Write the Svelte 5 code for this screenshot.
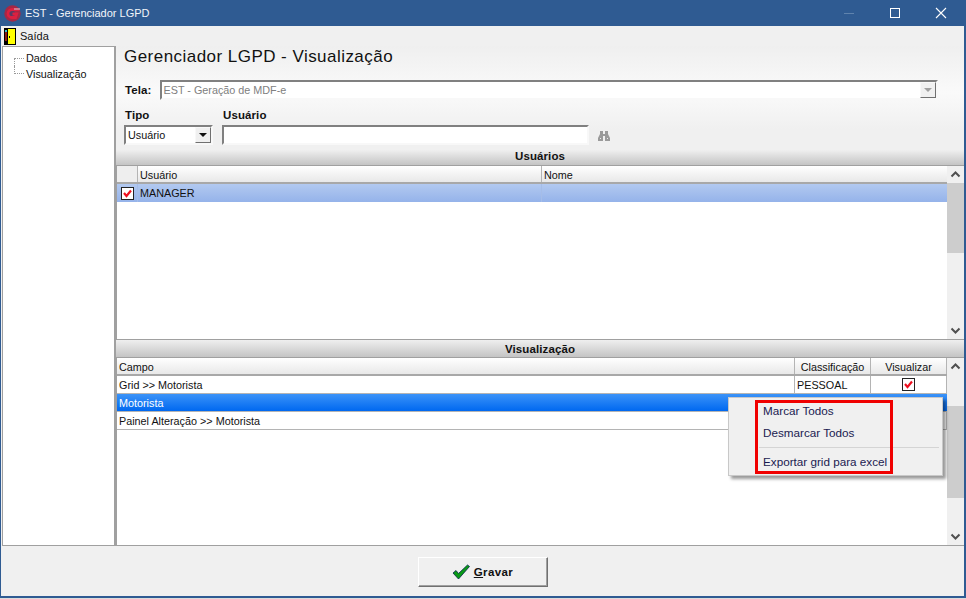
<script>
  let users = [{ login: "MANAGER", nome: "", marcado: true }];
  let campos = [
    { campo: "Grid >> Motorista", classe: "PESSOAL", visivel: true },
    { campo: "Motorista", classe: "", visivel: false, selected: true },
    { campo: "Painel Alteração >> Motorista", classe: "", visivel: false }
  ];
</script>

{#snippet check()}
  <svg class="check" width="13" height="13" viewBox="0 0 13 13">
    <rect x="0.5" y="0.5" width="12" height="12" fill="#fff" stroke="#222"/>
    <path d="M3 6l2.5 3L10 3.5" fill="none" stroke="#ee1020" stroke-width="2.2"/>
  </svg>
{/snippet}

{#snippet scrollbar(gap_top, thumb_h)}
  <div class="scrollbar">
    <svg class="arrow" width="17" height="17" viewBox="0 0 17 17"><path d="M4.5 10.5l4-4 4 4" fill="none" stroke="#505050" stroke-width="2"/></svg>
    <div class="track">
      <div class="thumb" style="margin-top:{gap_top}px;height:{thumb_h}px"></div>
    </div>
    <svg class="arrow" width="17" height="17" viewBox="0 0 17 17"><path d="M4.5 6.5l4 4 4-4" fill="none" stroke="#505050" stroke-width="2"/></svg>
  </div>
{/snippet}

<div class="window">
  <header class="titlebar">
    <svg class="logo" width="17" height="17" viewBox="0 0 17 17">
      <circle cx="8.5" cy="8.5" r="8.2" fill="#a52845"/>
      <circle cx="8" cy="8.5" r="3" fill="#5a3a62"/>
      <path d="M15.5 4.5H8a4 4 0 0 0 0 8h3.500l1.200-3.500H8.500" fill="none" stroke="#dc2040" stroke-width="2.800"/>
      <path d="M10 4h6" stroke="#c9ccd6" stroke-width="1"/>
    </svg>
    <span class="title">EST - Gerenciador LGPD</span>
    <div class="win-buttons">
      <svg width="46" height="26" viewBox="0 0 46 26"><path d="M18 13.5h10" stroke="#5f83ad" stroke-width="1"/></svg>
      <svg width="46" height="26" viewBox="0 0 46 26"><rect x="18.5" y="8.5" width="9" height="9" fill="none" stroke="#fff"/></svg>
      <svg width="46" height="26" viewBox="0 0 46 26"><path d="M18 8l10 10M28 8L18 18" stroke="#fff" stroke-width="1.1"/></svg>
    </div>
  </header>

  <nav class="menubar">
    <svg width="12" height="17" viewBox="0 0 12 17">
      <rect width="12" height="17" fill="#000"/>
      <rect x="4" y="1" width="7" height="15" fill="#ffff00"/>
      <rect x="1" y="3" width="2" height="10" fill="#8c1a14"/>
      <rect x="1" y="2" width="2" height="2" fill="#30c0d0"/>
      <rect x="5" y="8" width="1" height="2" fill="#000"/>
    </svg>
    <span>Saída</span>
  </nav>

  <div class="body">
    <aside class="tree">
      <div class="tree-item"><span class="dots"></span>Dados</div>
      <div class="tree-item"><span class="dots"></span>Visualização</div>
    </aside>

    <main class="content">
      <div class="form">
        <h1>Gerenciador LGPD - Visualização</h1>
        <div class="tela-row">
          <label for="tela">Tela:</label>
          <div class="combo disabled" id="tela">
            <span class="value">EST - Geração de MDF-e</span>
            <span class="combo-btn"><i></i></span>
          </div>
        </div>
        <div class="filter-row">
          <div class="field">
            <span class="field-label">Tipo</span>
            <div class="combo tipo">
              <span class="value">Usuário</span>
              <span class="combo-btn"><i></i></span>
            </div>
          </div>
          <div class="field">
            <span class="field-label">Usuário</span>
            <div class="text-input"></div>
          </div>
          <svg class="binoculars" width="12" height="11" viewBox="0 0 12 11">
            <path d="M2 1h3v3h2V1h3v3l2 4v3H7V6H5v5H0V8l2-4z" fill="#9a9a9a"/>
            <path d="M2 8h1v1H2zM9 8h1v1H9z" fill="#eee"/>
          </svg>
        </div>
      </div>

      <div class="section-bar">Usuários</div>
      <section class="grid top">
        <div class="grid-main">
          <div class="row head">
            <div class="cell c-check"></div>
            <div class="cell c-user">Usuário</div>
            <div class="cell c-fill">Nome</div>
          </div>
          {#each users as u}
            <div class="row user-row">
              <div class="cell c-check">{@render check()}</div>
              <div class="cell c-user">{u.login}</div>
              <div class="cell c-fill">{u.nome}</div>
            </div>
          {/each}
        </div>
        {@render scrollbar(0, 70)}
      </section>

      <div class="section-bar second">Visualização</div>
      <section class="grid bottom">
        <div class="grid-main">
          <div class="row head">
            <div class="cell c-campo">Campo</div>
            <div class="cell c-class">Classificação</div>
            <div class="cell c-vis">Visualizar</div>
          </div>
          {#each campos as c}
            <div class="row data" class:selected={c.selected}>
              <div class="cell c-campo">{c.campo}</div>
              <div class="cell c-class">{c.classe}</div>
              <div class="cell c-vis">{#if c.visivel}{@render check()}{/if}</div>
            </div>
          {/each}
        </div>
        {@render scrollbar(31, 92)}
      </section>
    </main>
  </div>

  <footer class="footer">
    <button class="save">
      <svg width="18" height="16" viewBox="0 0 18 16">
        <path d="M1 9l3-2.500 2.500 3L15.500 1l2 1.500L6.500 15z" fill="#0a9a16" stroke="#04244a" stroke-width="0.8"/>
      </svg>
      <span><u>G</u>ravar</span>
    </button>
  </footer>

  <div class="context-menu">
    <div class="menu-item">Marcar Todos</div>
    <div class="menu-item">Desmarcar Todos</div>
    <div class="menu-sep"></div>
    <div class="menu-item">Exportar grid para excel</div>
    <div class="highlight"></div>
  </div>
</div>

<style>
  :global(body) {
    background: #dcdcdc;
  }

  .window {
    position: relative;
    box-sizing: border-box;
    width: 966px;
    height: 598px;
    display: flex;
    flex-direction: column;
    border: solid #2f5b92;
    border-width: 0 2px 2px 1px;
    background: #f0f0f0;
    font-family: "Liberation Sans", Arial, sans-serif;
    font-size: 10.8px;
    color: #111;
    overflow: hidden;
  }

  .titlebar {
    flex: none;
    height: 26px;
    display: flex;
    align-items: center;
    background: #2f5b92;
    color: #f2f5f9;
    padding-left: 3px;
  }

  .logo {
    margin-right: 4px;
  }

  .title {
    font-size: 11px;
  }

  .win-buttons {
    margin-left: auto;
    display: flex;
  }

  .menubar {
    flex: none;
    height: 20px;
    display: flex;
    align-items: center;
    gap: 4px;
    padding-left: 3px;
    font-size: 11px;
  }

  .body {
    flex: 1;
    min-height: 0;
    display: flex;
    padding-left: 1px;
  }

  .tree {
    flex: none;
    box-sizing: border-box;
    width: 114px;
    background: #fff;
    border: 1px solid #a0a0a0;
    border-width: 1px 2px 1px 1px;
    padding-top: 3px;
  }

  .tree-item {
    height: 16px;
    display: flex;
    align-items: center;
    white-space: nowrap;
  }

  .dots {
    box-sizing: border-box;
    width: 10px;
    height: 8px;
    margin: 0 2px 0 11px;
    border-left: 1px dotted #999;
  }

  .tree-item:first-child .dots {
    align-self: flex-end;
    border-top: 1px dotted #999;
  }

  .tree-item:last-child .dots {
    align-self: flex-start;
    border-bottom: 1px dotted #999;
  }

  .content {
    flex: 1;
    min-width: 0;
    display: flex;
    flex-direction: column;
  }

  .form {
    flex: none;
    height: 104px;
    box-sizing: border-box;
    padding: 0 0 0 8px;
    background: linear-gradient(180deg, #efefef, #fafafa 45%, #f0f0f0 80%);
  }

  h1 {
    margin: 0;
    padding-top: 1px;
    font-size: 17px;
    font-weight: 400;
    line-height: 20px;
    letter-spacing: 0.46px;
    color: #111;
  }

  .tela-row {
    display: flex;
    align-items: center;
    gap: 8px;
    margin-top: 13px;
    padding-left: 1px;
  }

  .tela-row label,
  .field-label {
    font-weight: 700;
    font-size: 11.5px;
    letter-spacing: 0.1px;
  }

  .combo {
    display: flex;
    align-items: center;
    box-sizing: border-box;
    height: 20px;
    background: #fff;
    border: 2px solid;
    border-color: #808080 #f8f8f8 #f8f8f8 #808080;
    padding-left: 2px;
  }

  .combo.disabled {
    width: 778px;
    color: #808080;
  }

  .combo .value {
    flex: 1;
  }

  .combo-btn {
    flex: none;
    width: 16px;
    height: 16px;
    box-sizing: border-box;
    display: flex;
    align-items: center;
    justify-content: center;
    background: #f0f0f0;
    border: 1px solid;
    border-color: #f8f8f8 #707070 #707070 #f8f8f8;
  }

  .combo-btn i {
    border: 4px solid transparent;
    border-top: 4px solid #111;
    border-bottom: 0;
  }

  .disabled .combo-btn i {
    border-top-color: #a0a0a0;
  }

  .filter-row {
    display: flex;
    align-items: flex-end;
    margin-top: 8px;
  }

  .field {
    display: flex;
    flex-direction: column;
    gap: 3px;
  }

  .field + .field {
    margin-left: 9px;
  }

  .field-label {
    line-height: 14px;
    padding-left: 1px;
  }

  .tipo {
    width: 89px;
  }

  .text-input {
    box-sizing: border-box;
    width: 367px;
    height: 20px;
    background: #fff;
    border: 2px solid;
    border-color: #808080 #f8f8f8 #f8f8f8 #808080;
  }

  .binoculars {
    margin: 0 0 4px 9px;
  }

  .section-bar {
    flex: none;
    height: 16px;
    box-sizing: border-box;
    line-height: 13px;
    text-align: center;
    font-size: 11.5px;
    font-weight: 700;
    letter-spacing: 0.1px;
    background: linear-gradient(180deg, #efefef, #c4c4c4);
    border-bottom: 1px solid #a0a0a0;
  }

  .section-bar.second {
    height: 19px;
    line-height: 18px;
    border-top: 1px solid #a0a0a0;
  }

  .grid {
    display: flex;
    min-height: 0;
    background: #fff;
    border-left: 1px solid #a0a0a0;
  }

  .grid.top {
    flex: none;
    height: 173px;
  }

  .grid.bottom {
    flex: 1;
    border-bottom: 1px solid #a0a0a0;
  }

  .grid-main {
    flex: 1;
    min-width: 0;
  }

  .row {
    display: flex;
    box-sizing: border-box;
    height: 18px;
    border-bottom: 1px solid #b4b4b4;
  }

  .row.head {
    height: 18px;
    border-bottom: 2px solid #a8a8a8;
    background: linear-gradient(180deg, #fff, #e8e8e8);
  }

  .cell {
    box-sizing: border-box;
    display: flex;
    align-items: center;
    padding-left: 2px;
    border-right: 1px solid #b4b4b4;
    white-space: nowrap;
    overflow: hidden;
  }

  .head .cell {
    padding-top: 1px;
  }

  .head .c-check {
    background: #eeeeee;
  }

  .c-check {
    width: 21px;
    justify-content: center;
    padding: 0;
  }

  .c-user {
    width: 404px;
  }

  .c-fill {
    flex: 1;
    border-right: 0;
  }

  .user-row {
    border-bottom: 0;
    background: linear-gradient(180deg, #b2c9f0, #95b3ea);
  }

  .user-row .cell {
    border-right-color: #a5bde8;
  }

  .c-campo {
    flex: 1;
  }

  .c-class {
    width: 76px;
    justify-content: flex-start;
  }

  .head .c-class,
  .head .c-vis {
    justify-content: center;
    padding-left: 0;
  }

  .c-vis {
    width: 76px;
    justify-content: center;
    padding-left: 0;
  }

  .data.selected {
    background: linear-gradient(180deg, #3b93f8, #0068f0);
    color: #fff;
  }

  .data.selected .cell {
    border-right-color: transparent;
  }

  .scrollbar {
    flex: none;
    width: 17px;
    display: flex;
    flex-direction: column;
    background: #f0f0f0;
  }

  .arrow {
    flex: none;
  }

  .track {
    flex: 1;
    min-height: 0;
  }

  .thumb {
    background: #cdcdcd;
  }

  .footer {
    flex: none;
    box-sizing: border-box;
    height: 50px;
    padding-top: 2px;
    display: flex;
    justify-content: center;
    align-items: center;
  }

  .save {
    box-sizing: border-box;
    width: 130px;
    height: 30px;
    display: flex;
    align-items: center;
    justify-content: center;
    gap: 4px;
    background: #f0f0f0;
    border: 1px solid;
    border-color: #fff #707070 #707070 #fff;
    box-shadow: inset -1px -1px 0 #a0a0a0;
    font: 700 11.5px "Liberation Sans", Arial, sans-serif;
    letter-spacing: 0.4px;
    color: #111;
    padding: 0;
  }

  .context-menu {
    position: absolute;
    left: 727px;
    top: 397px;
    width: 215px;
    box-sizing: border-box;
    height: 79px;
    padding: 2px 0 0 34px;
    background: #f0f0f0;
    border: 1px solid #c8c8c8;
    box-shadow: 3px 3px 3px rgba(0, 0, 0, 0.4);
    font-size: 11.7px;
    color: #1a1a50;
  }

  .menu-item {
    height: 22px;
    line-height: 22px;
    white-space: nowrap;
  }

  .menu-sep {
    margin: 3px 3px 3px -4px;
    border-top: 1px solid #d4d4d4;
  }

  .highlight {
    position: absolute;
    left: 26px;
    top: 2px;
    width: 138px;
    height: 74px;
    border: 3px solid #f00000;
    box-sizing: border-box;
  }
</style>
